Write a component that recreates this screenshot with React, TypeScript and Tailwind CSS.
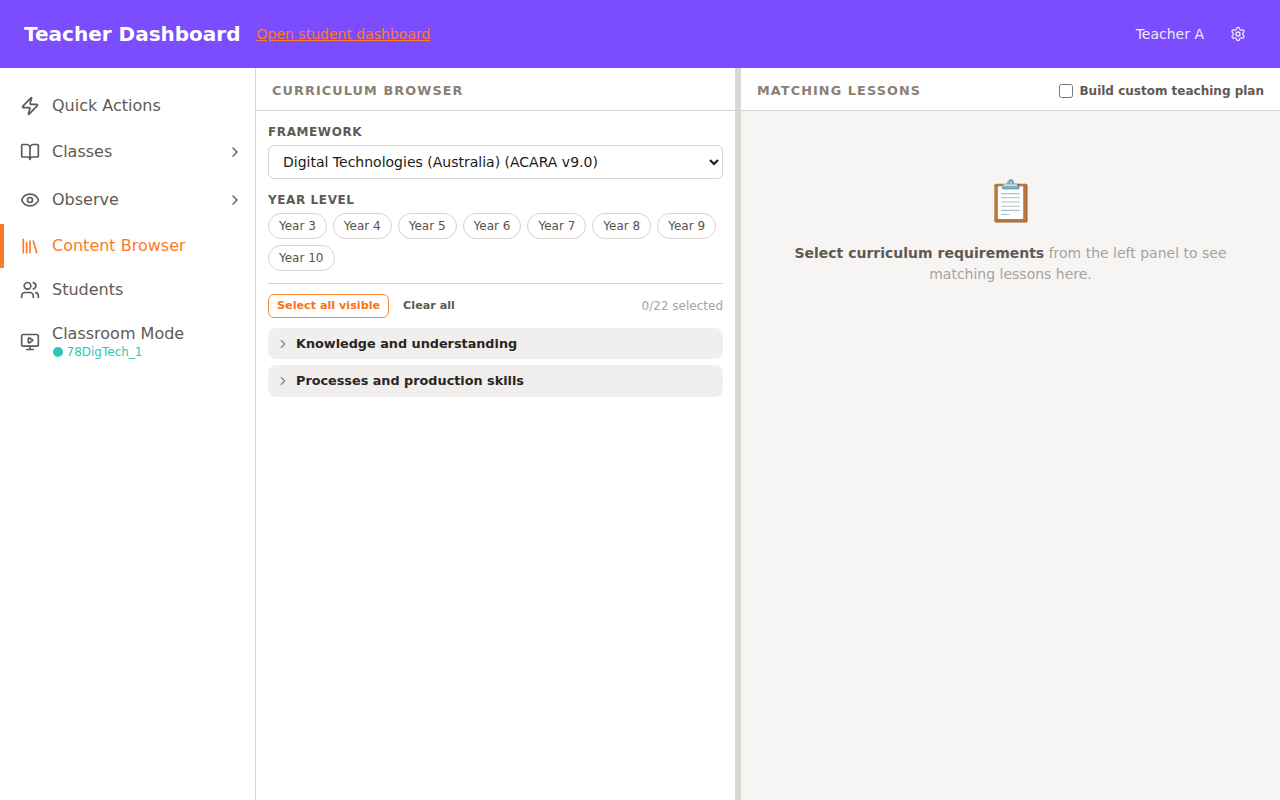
import { Zap, BookOpen, Eye, Library, Users, ChevronRight, Settings } from 'lucide-react';
import type { ReactNode } from 'react';

const years = ['Year 3', 'Year 4', 'Year 5', 'Year 6', 'Year 7', 'Year 8', 'Year 9', 'Year 10'];

const MonitorPlay = () => (
  <svg width="20" height="20" viewBox="0 0 24 24" fill="none" stroke="currentColor" strokeWidth="2" strokeLinecap="round" strokeLinejoin="round">
    <path d="M10 7.75a.75.75 0 0 1 1.142-.638l3.664 2.249a.75.75 0 0 1 0 1.278l-3.664 2.25a.75.75 0 0 1-1.142-.64z" />
    <path d="M12 17v4" />
    <path d="M8 21h8" />
    <rect x="2" y="3" width="20" height="14" rx="2" />
  </svg>
);

const NavItem = ({ icon, label, chevron, active, className }: { icon: ReactNode; label: string; chevron?: boolean; active?: boolean; className: string }) => (
  <div className={`flex items-center pr-3 border-l-4 pl-4 ${active ? 'border-[#ff7a25] text-[#ff7a25]' : 'border-transparent text-[#5f5a54]'} ${className}`}>
    <span className="w-5 h-5 mr-3 shrink-0">{icon}</span>
    <span className="flex-1 text-base">{label}</span>
    {chevron && <ChevronRight className="w-4 h-4" />}
  </div>
);

const SectionRow = ({ label, className }: { label: string; className: string }) => (
  <div className={`flex items-center px-2 rounded-lg bg-[#f0efed] ${className}`}>
    <ChevronRight className="w-[14px] h-[14px] text-[#8a8580] mr-[6px] shrink-0" />
    <span className="text-[12.8px] font-bold text-[#292524]">{label}</span>
  </div>
);

export default function App() {
  return (
    <div className="h-[800px] flex flex-col overflow-hidden bg-white font-['DejaVu_Sans',sans-serif]">
      <header className="h-[68px] shrink-0 flex items-center px-6 bg-[#7c4dff]">
        <h1 className="text-xl font-bold text-white">Teacher Dashboard</h1>
        <a className="ml-4 text-sm text-[#ff7a25] underline">Open student dashboard</a>
        <span className="ml-auto text-sm text-[#ede9fe]">Teacher A</span>
        <Settings className="w-4 h-4 ml-[26px] mr-[10px] text-[#ede9fe]" />
      </header>

      <div className="flex-1 flex min-h-0">
        <aside className="w-[256px] shrink-0 border-r border-[#d6d3d1] pt-[16px]">
          <NavItem className="h-[44px]" icon={<Zap className="w-5 h-5" />} label="Quick Actions" />
          <NavItem className="h-[46px] mt-[1px]" icon={<BookOpen className="w-5 h-5" />} label="Classes" chevron />
          <NavItem className="h-[46px] mt-[2px]" icon={<Eye className="w-5 h-5" />} label="Observe" chevron />
          <NavItem className="h-[44px] mt-[1px]" icon={<Library className="w-5 h-5" />} label="Content Browser" active />
          <NavItem className="h-[44px]" icon={<Users className="w-5 h-5" />} label="Students" />
          <div className="flex items-center pl-5 pr-4 pt-[12px] text-[#5f5a54]">
            <span className="w-5 h-5 mr-3 shrink-0"><MonitorPlay /></span>
            <div>
              <div className="text-base leading-[20px]">Classroom Mode</div>
              <div className="flex items-center text-xs leading-[16px] text-[#2dc6b4]">
                <span className="w-[10px] h-[10px] rounded-full bg-[#2dc6b4] ml-[1px] mr-[3px]" />
                <span className="pl-[0.5px]">78DigTech_1</span>
              </div>
            </div>
          </div>
        </aside>

        <section className="w-[479px] shrink-0 flex flex-col">
          <div className="h-[43px] shrink-0 flex items-center px-4 pt-1 border-b border-[#d6d3d1]">
            <h2 className="text-[12.8px] font-bold tracking-[1.1px] text-[#8a8074]">CURRICULUM BROWSER</h2>
          </div>
          <div className="px-3 pt-[14px]">
            <div className="text-xs font-bold tracking-[0.6px] text-[#5f5a54] leading-[15px]">FRAMEWORK</div>
            <select className="mt-[5px] w-full h-[34px] pl-[10px] pr-[2px] text-sm text-[#1c1917] bg-white border border-[#d6d3d1] rounded-md">
              <option>Digital Technologies (Australia) (ACARA v9.0)</option>
            </select>
            <div className="mt-[14px] text-xs font-bold tracking-[0.6px] text-[#5f5a54] leading-[15px]">YEAR LEVEL</div>
            <div className="mt-[5px] flex flex-wrap gap-[6px]">
              {years.map((y) => (
                <span key={y} className="h-[26px] px-[10px] flex items-center rounded-full border border-[#d6d3d1] text-xs text-[#57534e]">{y}</span>
              ))}
            </div>
            <div className="mt-3 border-t border-[#d6d3d1]" />
            <div className="mt-[10px] flex items-center">
              <span className="h-[24px] px-2 flex items-center rounded-md border border-[#ff8a3c] text-[11.2px] font-bold text-[#f97316]">Select all visible</span>
              <span className="ml-[14px] text-[11.2px] font-bold text-[#5f5a54]">Clear all</span>
              <span className="ml-auto text-xs text-[#a8a29e]">0/22 selected</span>
            </div>
            <div className="mt-[10px] flex flex-col gap-[6px]">
              <SectionRow className="h-[31px]" label="Knowledge and understanding" />
              <SectionRow className="h-[32px]" label="Processes and production skills" />
            </div>
          </div>
        </section>

        <div className="w-[6px] shrink-0 bg-[#d9d7d2]" />

        <section className="flex-1 flex flex-col bg-[#f6f5f3]">
          <div className="h-[43px] shrink-0 flex items-center px-4 pt-1 bg-white border-b border-[#d6d3d1]">
            <h2 className="text-[12.8px] font-bold tracking-[1.1px] text-[#8a8074]">MATCHING LESSONS</h2>
            <label className="ml-auto flex items-center text-xs font-bold text-[#5f5a54]">
              <input type="checkbox" className="w-[14px] h-[14px] mr-[6px]" />
              Build custom teaching plan
            </label>
          </div>
          <div className="flex flex-col items-center pt-[60px] px-[48px] text-center">
            <div className="text-[40px] leading-[60px]">📋</div>
            <p className="mt-[12px] text-sm leading-[21px] text-[#a8a29e]">
              <strong className="font-bold text-[#5f5a54]">Select curriculum requirements</strong> from the left panel to see matching lessons here.
            </p>
          </div>
        </section>
      </div>
    </div>
  );
}
